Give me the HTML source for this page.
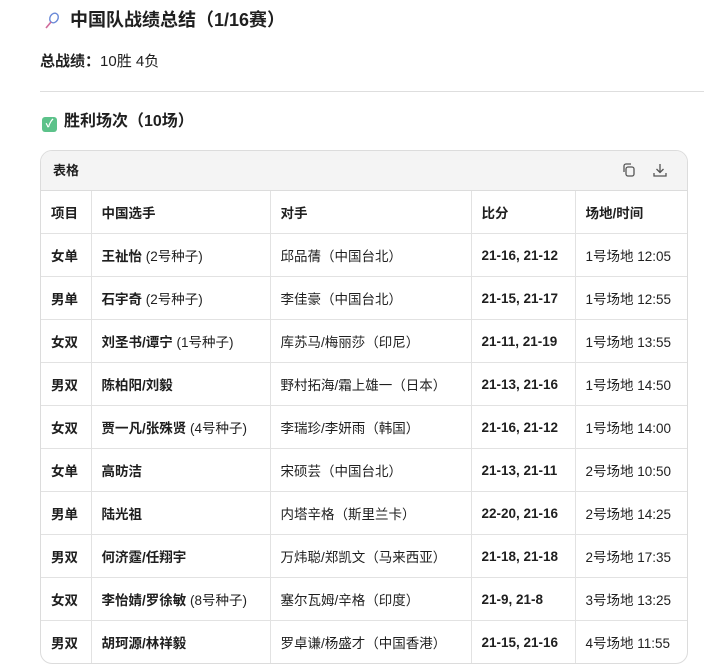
<!DOCTYPE html>
<html><head><meta charset="utf-8"><style>
body{margin:0;background:#fff;font-family:"Liberation Sans","Noto Sans CJK SC",sans-serif;color:#1f1f1f;width:704px;height:670px;overflow:hidden;position:relative}
.t{position:absolute;left:70px;top:8px;font-size:18px;font-weight:bold;line-height:24px}
.s{position:absolute;left:40px;top:51px;font-size:15px;line-height:22px}
.hr{position:absolute;left:40px;right:0;top:91px;border-top:1px solid #dedede}
.h2{position:absolute;left:42px;top:110px;font-size:16px;font-weight:bold;line-height:24px}
.box{position:absolute;left:40px;top:150px;width:646px;height:512px;border:1px solid #dcdcdc;border-radius:12px;overflow:hidden}
.bar{height:39px;background:#f4f4f4;border-bottom:1px solid #dcdcdc;font-size:13px;font-weight:bold;line-height:39px;padding-left:12px;position:relative}
table{border-collapse:collapse;font-size:13.5px}
td{border-bottom:1px solid #e2e2e2;border-right:1px solid #e2e2e2;height:42px;padding:0 0 0 10px;white-space:nowrap}
td:last-child{border-right:none}
tr:last-child td{border-bottom:none}
td.b,tr.h td{font-weight:bold}
</style></head><body>
<div class="t"><svg style="position:absolute;left:-26px;top:4px" width="16" height="18" viewBox="0 0 16 18" fill="none"><ellipse cx="10" cy="6" rx="4" ry="5" stroke="#6a8ad8" stroke-width="1.4" transform="rotate(30 10 6)"/><path d="M7 10L2 16" stroke="#d06a9a" stroke-width="1.6"/></svg>中国队战绩总结（1/16赛）</div>
<div class="s"><b>总战绩：</b>10胜 4负</div>
<div class="hr"></div>
<div class="h2"><span style="display:inline-block;width:15px;height:15px;background:#5cc28a;border-radius:3px;color:#fff;font-size:11px;line-height:15px;text-align:center;vertical-align:-1px;margin-right:7px">✓</span>胜利场次（10场）</div>
<div class="box">
<div class="bar">表格
<svg style="position:absolute;left:580px;top:11px" width="16" height="16" viewBox="0 0 16 16" fill="none" stroke="#555" stroke-width="1.3"><rect x="5" y="5" width="8" height="9" rx="2"/><path d="M3 10V4a2 2 0 0 1 2-2h5"/></svg>
<svg style="position:absolute;left:611px;top:11px" width="16" height="16" viewBox="0 0 16 16" fill="none" stroke="#555" stroke-width="1.3"><path d="M8 2v8M4.5 7L8 10.5 11.5 7M2 11v3h12v-3"/></svg>
</div>
<table>
<colgroup><col style="width:50px"><col style="width:179px"><col style="width:201px"><col style="width:104px"><col style="width:112px"></colgroup>
<tr class="h"><td>项目</td><td>中国选手</td><td>对手</td><td>比分</td><td>场地/时间</td></tr>
<tr><td class="b">女单</td><td><b>王祉怡</b> (2号种子)</td><td>邱品蒨（中国台北）</td><td class="b">21-16, 21-12</td><td>1号场地 12:05</td></tr>
<tr><td class="b">男单</td><td><b>石宇奇</b> (2号种子)</td><td>李佳豪（中国台北）</td><td class="b">21-15, 21-17</td><td>1号场地 12:55</td></tr>
<tr><td class="b">女双</td><td><b>刘圣书/谭宁</b> (1号种子)</td><td>库苏马/梅丽莎（印尼）</td><td class="b">21-11, 21-19</td><td>1号场地 13:55</td></tr>
<tr><td class="b">男双</td><td><b>陈柏阳/刘毅</b></td><td>野村拓海/霜上雄一（日本）</td><td class="b">21-13, 21-16</td><td>1号场地 14:50</td></tr>
<tr><td class="b">女双</td><td><b>贾一凡/张殊贤</b> (4号种子)</td><td>李瑞珍/李妍雨（韩国）</td><td class="b">21-16, 21-12</td><td>1号场地 14:00</td></tr>
<tr><td class="b">女单</td><td><b>高昉洁</b></td><td>宋硕芸（中国台北）</td><td class="b">21-13, 21-11</td><td>2号场地 10:50</td></tr>
<tr><td class="b">男单</td><td><b>陆光祖</b></td><td>内塔辛格（斯里兰卡）</td><td class="b">22-20, 21-16</td><td>2号场地 14:25</td></tr>
<tr><td class="b">男双</td><td><b>何济霆/任翔宇</b></td><td>万炜聪/郑凯文（马来西亚）</td><td class="b">21-18, 21-18</td><td>2号场地 17:35</td></tr>
<tr><td class="b">女双</td><td><b>李怡婧/罗徐敏</b> (8号种子)</td><td>塞尔瓦姆/辛格（印度）</td><td class="b">21-9, 21-8</td><td>3号场地 13:25</td></tr>
<tr><td class="b">男双</td><td><b>胡珂源/林祥毅</b></td><td>罗卓谦/杨盛才（中国香港）</td><td class="b">21-15, 21-16</td><td>4号场地 11:55</td></tr>
</table>
</div>
</body></html>
